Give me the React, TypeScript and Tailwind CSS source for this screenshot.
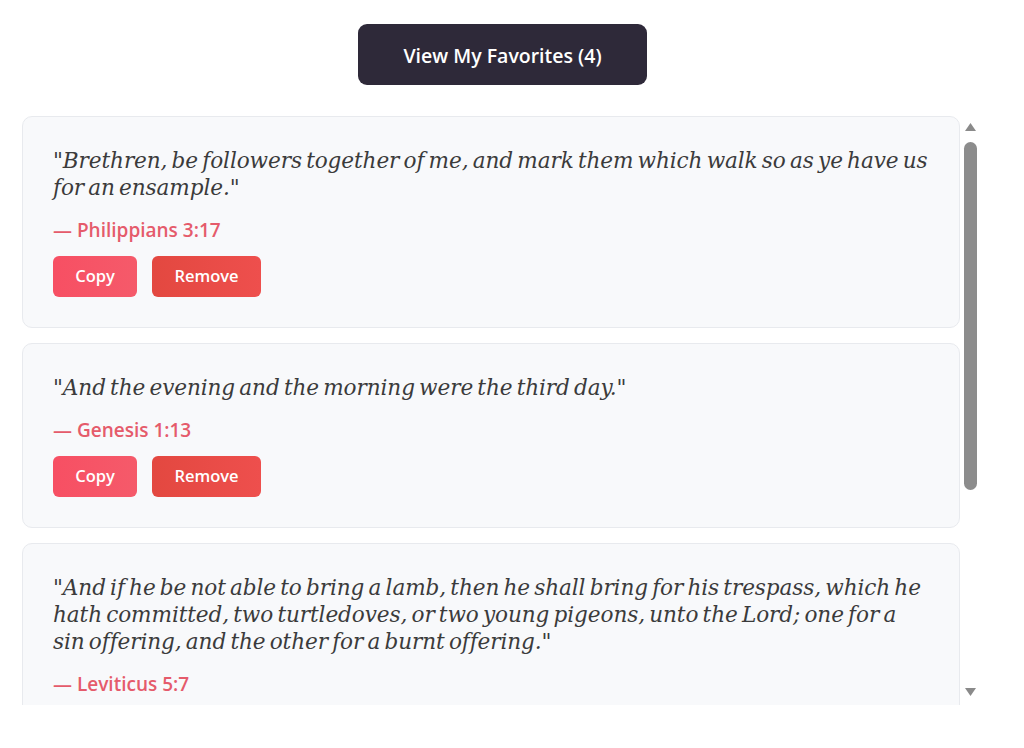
import React from "react";

type Verse = { text: string; ref: string };

const favorites: Verse[] = [
  {
    text: "Brethren, be followers together of me, and mark them which walk so as ye have us for an ensample.",
    ref: "Philippians 3:17",
  },
  { text: "And the evening and the morning were the third day.", ref: "Genesis 1:13" },
  {
    text: "And if he be not able to bring a lamb, then he shall bring for his trespass, which he hath committed, two turtledoves, or two young pigeons, unto the Lord; one for a sin offering, and the other for a burnt offering.",
    ref: "Leviticus 5:7",
  },
];

const sans = { fontFamily: '"Open Sans", "Noto Sans", sans-serif' };
const serif = { fontFamily: '"DejaVu Serif", Georgia, serif', wordSpacing: "-2.5px" };

function VerseCard({ verse }: { verse: Verse }) {
  return (
    <div className="shrink-0 rounded-[10px] border border-[#e8eaee] bg-[#f8f9fb] px-[30px] pt-[30px] pb-[30px]">
      <p className="text-[21.6px] italic leading-[27px] tracking-[-0.1px] text-[#3b3b3b]" style={serif}>
        {`"${verse.text}"`}
      </p>
      <div className="mt-[16px] text-[19px] font-semibold leading-[27px] text-[#e55b6b]" style={sans}>
        {`— ${verse.ref}`}
      </div>
      <div className="mt-[12px] flex gap-[15px]" style={sans}>
        <button className="h-[41px] w-[84px] rounded-[6px] bg-gradient-to-r from-[#f74f63] to-[#f55a6a] text-[16.5px] font-semibold text-white">
          Copy
        </button>
        <button className="h-[41px] w-[109px] rounded-[6px] bg-gradient-to-r from-[#e34840] to-[#ee4f4d] text-[16.5px] font-semibold text-white">
          Remove
        </button>
      </div>
    </div>
  );
}

function Scrollbar() {
  return (
    <div className="flex w-[15px] shrink-0 flex-col items-center">
      <svg width="13" height="10" viewBox="0 0 13 10" className="mt-[6px]">
        <polygon points="6.5,1 12,9 1,9" fill="#8a8a8a" />
      </svg>
      <div className="mt-[10px] h-[348px] w-[13px] rounded-full bg-[#8c8c8c]" />
      <div className="flex-1" />
      <svg width="13" height="10" viewBox="0 0 13 10" className="mb-[8px]">
        <polygon points="1,1 12,1 6.5,9" fill="#8a8a8a" />
      </svg>
    </div>
  );
}

export default function App() {
  return (
    <div className="h-[748px] w-[1024px] overflow-hidden bg-white">
      <div className="ml-[22px] w-[961px] pt-[24px]">
        <div className="flex justify-center">
          <button
            className="h-[61px] w-[289px] rounded-[9px] bg-[#2e2939] pt-[3px] text-[19.5px] font-semibold text-white"
            style={sans}
          >
            View My Favorites (4)
          </button>
        </div>
        <div className="mt-[31px] flex h-[589px] w-[956px] gap-[3px]">
          <div className="flex w-[938px] flex-col gap-[15px] overflow-hidden">
            {favorites.map((v) => (
              <VerseCard key={v.ref} verse={v} />
            ))}
          </div>
          <Scrollbar />
        </div>
      </div>
    </div>
  );
}
